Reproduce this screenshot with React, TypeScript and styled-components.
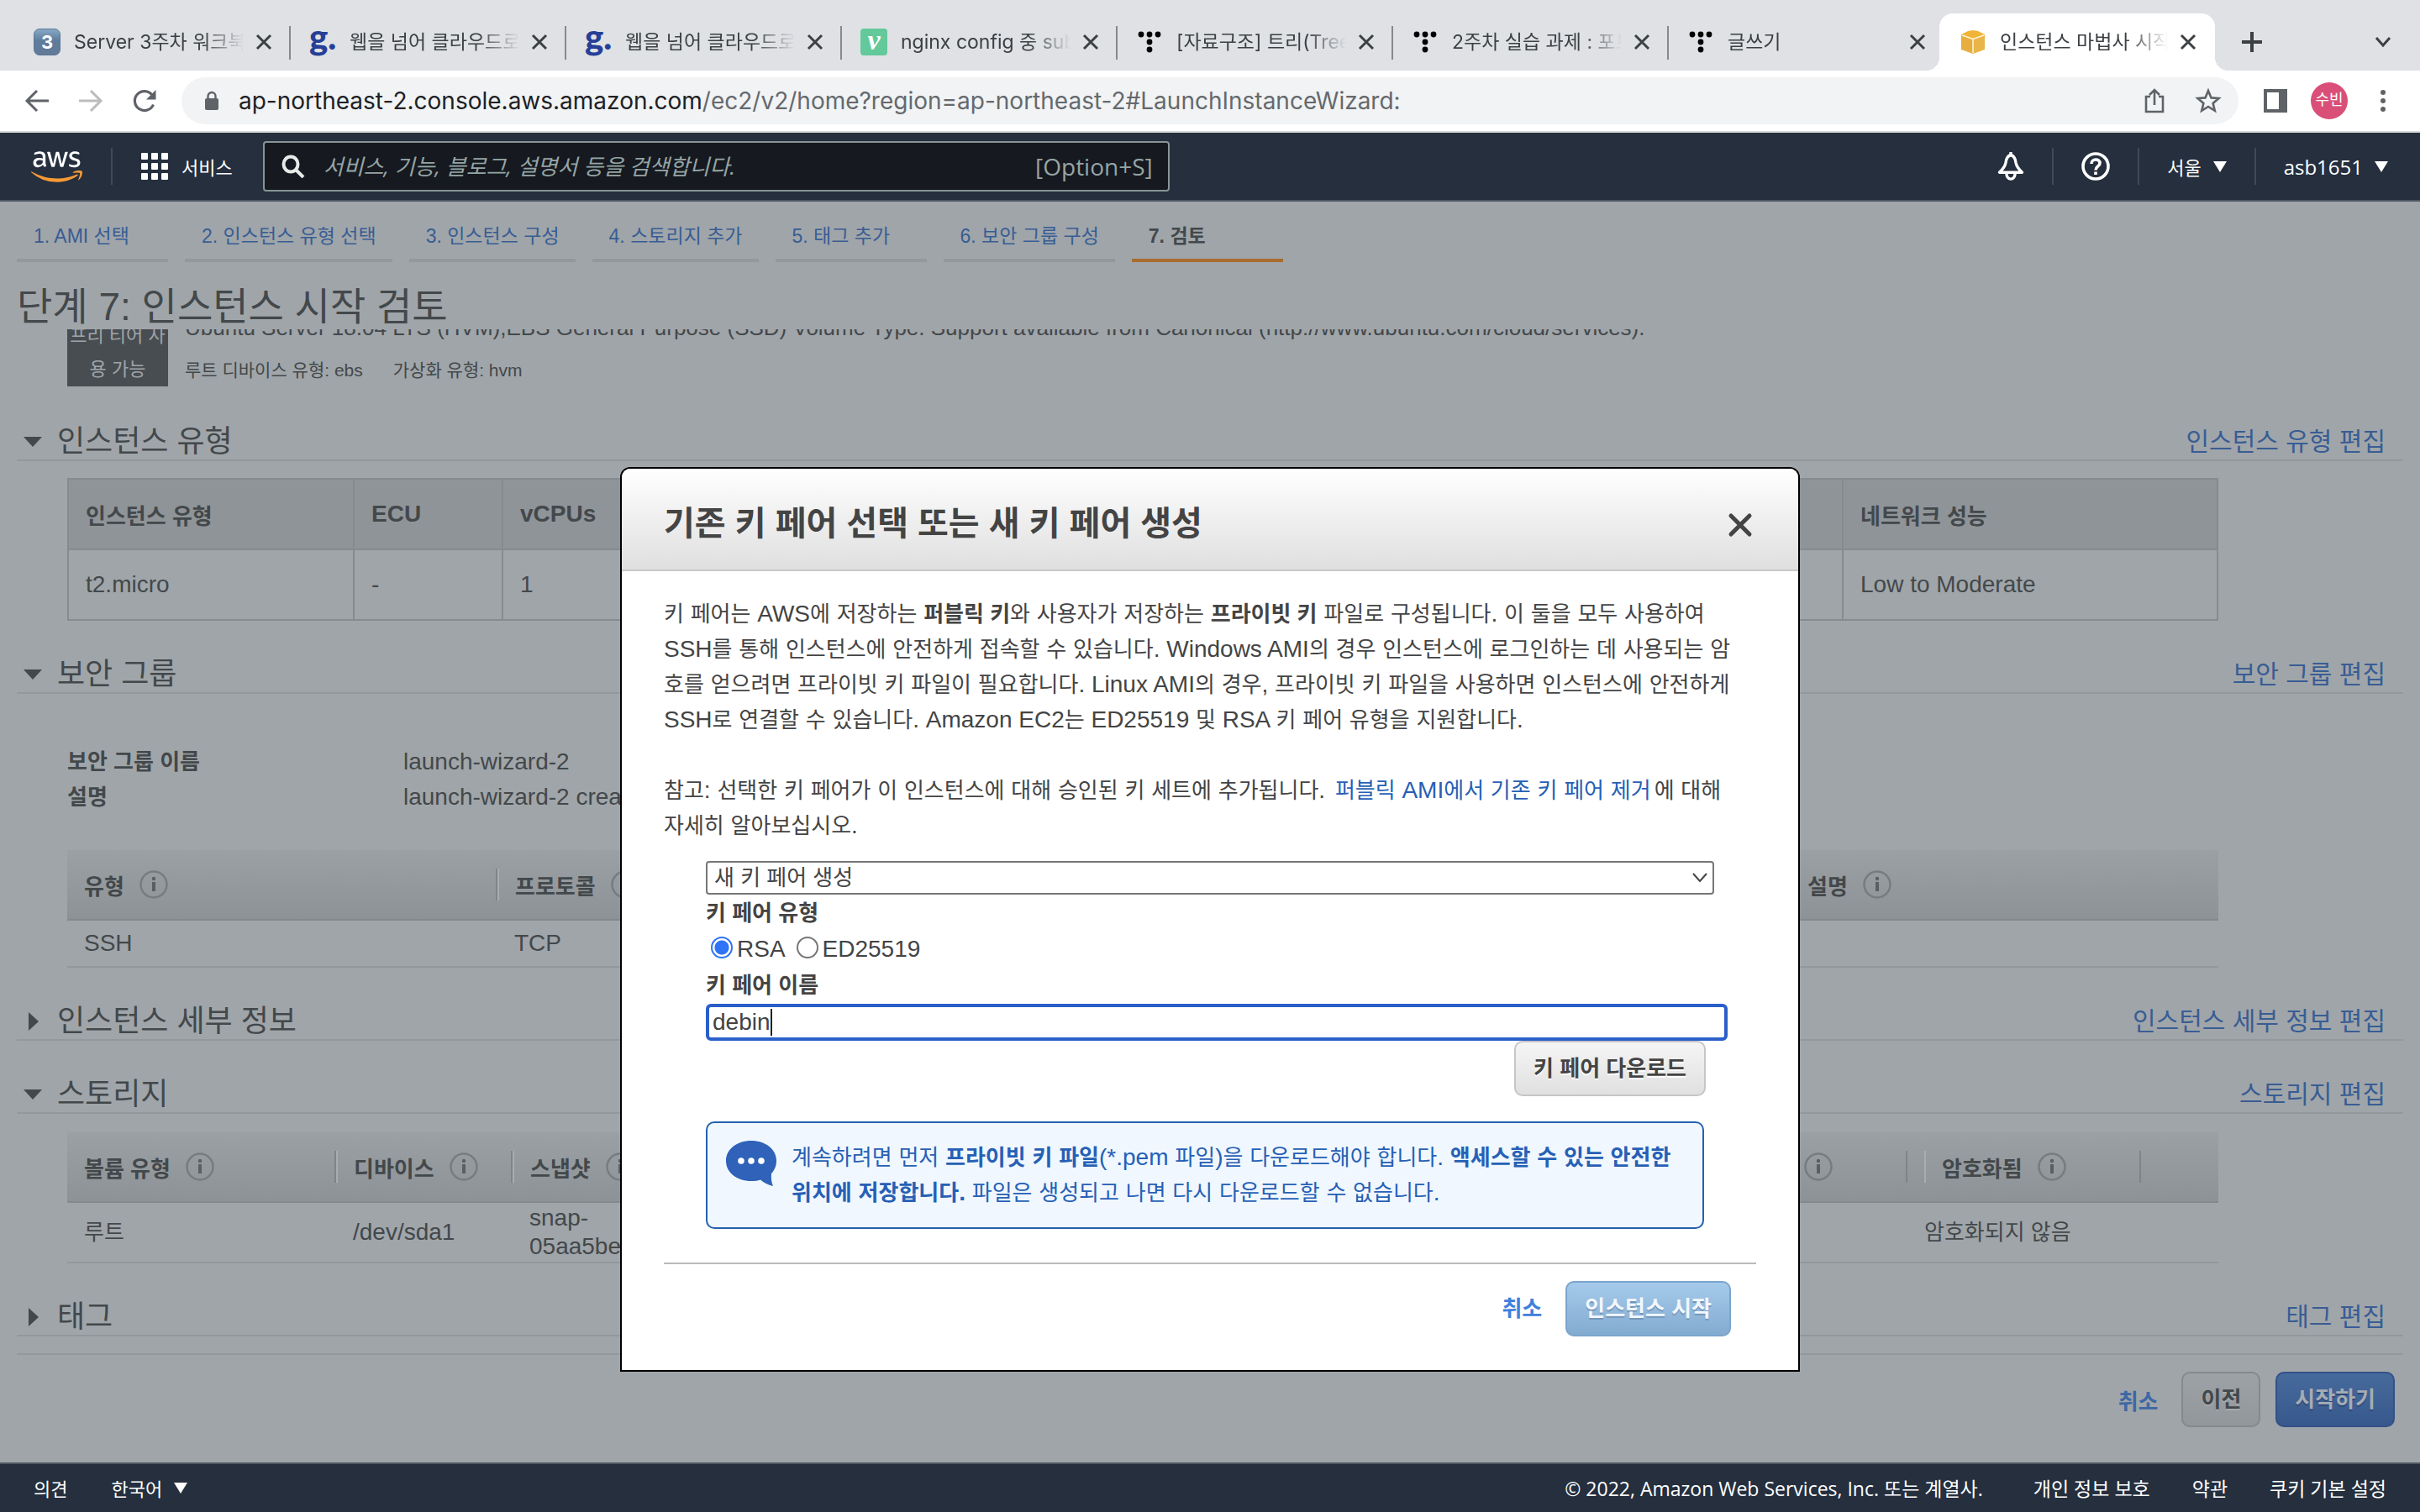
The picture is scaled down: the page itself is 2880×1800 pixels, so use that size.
import React from "react";
import styled, { createGlobalStyle, css } from "styled-components";
import { FaAws } from "react-icons/fa";

const body = `"Liberation Sans", "Noto Sans CJK KR", sans-serif`;
const ember = `"Open Sans", "Noto Sans CJK KR", sans-serif`;
const system = `Inter, "Noto Sans CJK KR", sans-serif`;

const dim = {
  page: "#a0a5a9",
  text: "#43484b",
  link: "#385d94",
  line: "#93989c",
  edge: "#868b8f",
  head: "#8f9498",
};

const GlobalStyle = createGlobalStyle`
  *, *::before, *::after { box-sizing: border-box; }
  body { margin: 0; font-family: ${body}; color: #444; }
  button, input, select { font: inherit; color: inherit; margin: 0; }
  button { cursor: pointer; }
  a { text-decoration: none; color: inherit; }
  h1, h2, p, dl, dd { margin: 0; }
  svg { display: block; flex: none; }
`;

const Screen = styled.div`
  min-height: 100vh;
  display: flex;
  flex-direction: column;
  background: ${dim.page};
`;

/* ---------- browser chrome ---------- */

const TabStrip = styled.div`
  display: flex;
  align-items: flex-end;
  height: 84px;
  padding-left: 18px;
  background: #dfe1e5;
  font-family: ${system};
  font-size: 23px;
  color: #3c4043;
`;

const Tab = styled.div<{ $active?: boolean; $divider?: boolean }>`
  position: relative;
  flex: 0 1 328px;
  min-width: 0;
  height: 68px;
  display: flex;
  align-items: center;
  padding: 0 22px;
  ${(p) =>
    p.$divider &&
    css`
      &::after {
        content: "";
        position: absolute;
        right: 0;
        top: 15px;
        width: 2px;
        height: 40px;
        background: #85888c;
      }
    `}
  ${(p) =>
    p.$active &&
    css`
      margin-left: -6px;
      padding: 0 22px 0 24px;
      background: #fff;
      border-radius: 16px 16px 0 0;
      &::before,
      &::after {
        content: "";
        position: absolute;
        bottom: 0;
        width: 16px;
        height: 16px;
      }
      &::before {
        left: -16px;
        background: radial-gradient(circle at 0 0, transparent 16px, #fff 16px);
      }
      &::after {
        right: -16px;
        background: radial-gradient(circle at 100% 0, transparent 16px, #fff 16px);
      }
    `}
`;

const TabTitle = styled.span`
  flex: 1;
  min-width: 0;
  margin: 0 14px 0 16px;
  line-height: 36px;
  white-space: nowrap;
  overflow: hidden;
  mask-image: linear-gradient(to right, #000 calc(100% - 48px), transparent);
`;

const IconButton = styled.button`
  display: flex;
  align-items: center;
  justify-content: center;
  padding: 0;
  border: 0;
  background: none;
`;

const StripButton = styled(IconButton)<{ $end?: boolean }>`
  width: 32px;
  height: 68px;
  margin-left: ${(p) => (p.$end ? "auto" : "28px")};
  margin-right: ${(p) => (p.$end ? "28px" : "0")};
`;

const Keycap = styled.span`
  flex: none;
  width: 32px;
  height: 32px;
  border-radius: 7px;
  border: 1px solid #5b7896;
  background: linear-gradient(#86a8c6, #5f7c9c 45%, #637a98);
  color: #fff;
  font-size: 22px;
  font-weight: 700;
  line-height: 30px;
  text-align: center;
`;

const GMark = styled.span`
  flex: none;
  width: 32px;
  font-family: Lato, sans-serif;
  font-weight: 900;
  font-size: 42px;
  line-height: 26px;
  height: 40px;
  color: #263f96;
`;

const Velog = styled.span`
  flex: none;
  width: 32px;
  height: 32px;
  border-radius: 4px;
  background: #63c99a;
  color: #fff;
  font-family: "Liberation Serif", serif;
  font-style: italic;
  font-weight: 700;
  font-size: 34px;
  line-height: 28px;
  text-align: center;
`;

const Toolbar = styled.div`
  display: flex;
  align-items: center;
  height: 74px;
  padding: 0 28px;
  background: #fff;
  border-bottom: 2px solid #d9dadb;
  color: #5f6368;
`;

const NavButtons = styled.div`
  display: flex;
  gap: 32px;
  margin-right: 28px;
`;

const AddressBar = styled.div`
  flex: 1;
  display: flex;
  align-items: center;
  height: 56px;
  padding: 0 20px 0 24px;
  border-radius: 28px;
  background: #f1f3f4;
  font-family: ${system};
  font-size: 28px;
`;

const Url = styled.span`
  flex: 1;
  margin-left: 20px;
  color: #65696d;
  white-space: nowrap;
  b { font-weight: 400; color: #202124; }
`;

const AddressActions = styled.div`
  display: flex;
  gap: 32px;
`;

const BrowserActions = styled.div`
  display: flex;
  align-items: center;
  gap: 26px;
  margin-left: 28px;
`;

const Avatar = styled.span`
  width: 44px;
  height: 44px;
  border-radius: 50%;
  background: #d94f78;
  color: #fff;
  font-family: ${system};
  font-size: 18px;
  line-height: 42px;
  text-align: center;
`;

/* ---------- console header ---------- */

const ConsoleNav = styled.header`
  display: flex;
  align-items: center;
  height: 82px;
  padding: 0 38px 0 37px;
  background: #252f3e;
  border-bottom: 2px solid #4e5764;
  color: #fff;
  font-family: ${ember};
  font-size: 24px;
`;

const AwsLogo = styled.a`
  display: flex;
  margin-right: 34px;
  svg { fill: url(#aws-smile); }
`;

const NavRule = styled.span`
  width: 2px;
  height: 44px;
  background: #3f4a57;
`;

const Services = styled.button`
  display: flex;
  align-items: center;
  gap: 16px;
  margin: 0 36px 0 34px;
  padding: 0;
  border: 0;
  background: none;
  font-size: 22px;
`;

const SearchBox = styled.label`
  display: flex;
  align-items: center;
  flex: 0 1 1079px;
  height: 60px;
  padding: 0 18px 0 20px;
  border: 2px solid #879596;
  border-radius: 4px;
  background: #16191f;
  color: #95a5a6;
  font-size: 28px;
  input {
    flex: 1;
    min-width: 0;
    margin-left: 22px;
    padding: 0;
    border: 0;
    outline: 0;
    background: none;
    font-size: 26px;
  }
  input::placeholder {
    color: #95a5a6;
    font-style: italic;
    opacity: 1;
  }
`;

const NavRight = styled.div`
  display: flex;
  align-items: center;
  gap: 33px;
  margin-left: auto;
`;

const MenuButton = styled.button<{ $hangul?: boolean }>`
  display: flex;
  align-items: center;
  gap: 14px;
  padding: 0;
  border: 0;
  background: none;
  font-size: ${(p) => (p.$hangul ? 22 : 24)}px;
`;

/* ---------- wizard page ---------- */

const Main = styled.main`
  position: relative;
  flex: 1;
  display: flex;
  flex-direction: column;
  padding: 0 20px;
  color: ${dim.text};
  font-size: 26px;
`;

const Steps = styled.nav`
  display: flex;
  gap: 20px;
  font-size: 23px;
`;

const Step = styled.a<{ $current?: boolean }>`
  min-width: 180px;
  padding: 24px 19px 10px 20px;
  line-height: 34px;
  border-bottom: 4px solid ${(p) => (p.$current ? "#a96c30" : dim.line)};
  color: ${(p) => (p.$current ? dim.text : dim.link)};
  font-weight: ${(p) => (p.$current ? 700 : 400)};
  white-space: nowrap;
`;

const PageTitle = styled.h1`
  margin-top: 26px;
  font-size: 46px;
  font-weight: 400;
  line-height: 54px;
`;

const AmiSummary = styled.div`
  display: flex;
  align-items: flex-end;
  gap: 20px;
  height: 68px;
  margin-bottom: 2px;
  padding-left: 60px;
  overflow: hidden;
`;

const FreeTier = styled.span`
  width: 120px;
  background: #484d51;
  color: ${dim.page};
  font-size: 22px;
  line-height: 40px;
  text-align: center;
  word-break: break-all;
`;

const AmiText = styled.div`
  font-size: 26px;
  line-height: 40px;
  white-space: nowrap;
`;

const AmiMeta = styled.div`
  display: flex;
  gap: 36px;
  font-size: 21px;
  line-height: 38px;
  padding-top: 12px;
`;

const SectionBox = styled.section`
  margin-top: 41px;
`;

const SectionHead = styled.div`
  display: flex;
  align-items: center;
  justify-content: space-between;
  height: 46px;
  padding: 2px 21px 0 8px;
  border-bottom: 2px solid ${dim.line};
  a {
    color: ${dim.link};
    font-size: 30px;
    line-height: 44px;
  }
`;

const SectionTitle = styled.h2`
  display: flex;
  align-items: center;
  gap: 18px;
  font-size: 36px;
  font-weight: 400;
  line-height: 44px;
`;

const SectionBody = styled.div<{ $top: number }>`
  padding: ${(p) => p.$top}px 220px 0 60px;
`;

const SpecTable = styled.table`
  width: 100%;
  table-layout: fixed;
  border-collapse: collapse;
  th,
  td {
    height: 84px;
    padding: 0 20px;
    border: 2px solid ${dim.edge};
    text-align: left;
    white-space: nowrap;
  }
  th { background: ${dim.head}; }
  td { font-size: 28px; }
`;

const Latin = styled.span`
  font-size: 28px;
`;

const Details = styled.dl`
  display: grid;
  grid-template-columns: 400px 1fr;
  margin-bottom: 42px;
  line-height: 42px;
  dt { font-weight: 700; }
  dd { font-size: 28px; }
`;

const GridTable = styled.table<{ $row: number }>`
  width: 100%;
  table-layout: fixed;
  border-collapse: separate;
  border-spacing: 0;
  thead { background: linear-gradient(#9ba0a4, #8d9296); }
  th {
    height: 84px;
    padding: 0;
    border-bottom: 2px solid #84898d;
    text-align: left;
  }
  td {
    height: ${(p) => p.$row}px;
    padding: 0 20px;
    border-bottom: 2px solid ${dim.line};
    line-height: 34px;
    white-space: nowrap;
  }
`;

const HeadCell = styled.div<{ $first?: boolean; $last?: boolean; $inset?: boolean }>`
  display: flex;
  align-items: center;
  gap: 18px;
  height: 38px;
  margin-left: ${(p) => (p.$inset ? 20 : 0)}px;
  padding-left: ${(p) => (p.$first ? 20 : 19)}px;
  border-left: ${(p) => (p.$first ? 0 : 2)}px solid #a9adb1;
  border-right: ${(p) => (p.$last ? 0 : 2)}px solid #7f8488;
  white-space: nowrap;
`;

const PageActions = styled.div`
  display: flex;
  align-items: center;
  justify-content: flex-end;
  gap: 18px;
  margin-top: 20px;
  padding: 20px 10px 0 0;
  border-top: 2px solid ${dim.line};
`;

const CancelLink = styled.a<{ $dim?: boolean }>`
  margin-right: 10px;
  color: ${(p) => (p.$dim ? "#3d68a4" : "#4080dc")};
  font-size: 26px;
  font-weight: 700;
`;

const tones = {
  light: { bg: "linear-gradient(#f5f5f5, #e0e0e0)", line: "#c6c6c6", ink: "#444", glow: "#fff" },
  lightDim: { bg: "linear-gradient(#9da2a6, #92979b)", line: "#85898d", ink: dim.text, glow: "#a6abaf" },
  primaryDim: { bg: "linear-gradient(#476a9c, #37588c)", line: "#325188", ink: "#a5acb4", glow: "#2c4876" },
  disabled: { bg: "linear-gradient(#a5caeb, #83abd0)", line: "#7ba5cc", ink: "#f1f7fd", glow: "#7396b8" },
};

const Button = styled.button<{ $tone: keyof typeof tones }>`
  height: 66px;
  padding: 0 21px;
  border: 2px solid ${(p) => tones[p.$tone].line};
  border-radius: 10px;
  background: ${(p) => tones[p.$tone].bg};
  color: ${(p) => tones[p.$tone].ink};
  text-shadow: 0 2px 0 ${(p) => tones[p.$tone].glow};
  font-size: 26px;
  font-weight: 700;
  line-height: 40px;
  white-space: nowrap;
`;

/* ---------- key pair dialog ---------- */

const DialogLayer = styled.div`
  position: absolute;
  inset: 0;
  display: flex;
  justify-content: center;
  align-items: flex-start;
  padding-top: 316px;
`;

const Dialog = styled.div`
  width: 1404px;
  border: 2px solid #000;
  border-radius: 12px 12px 0 0;
  background: #fff;
  color: #444;
  font-size: 26px;
  line-height: 42px;
  overflow: hidden;
`;

const DialogHead = styled.div`
  display: flex;
  align-items: center;
  justify-content: space-between;
  height: 122px;
  padding: 14px 54px 0 50px;
  border-bottom: 2px solid #c8c8c8;
  background: linear-gradient(#fff, #dfdfdf);
  h2 {
    font-size: 40px;
    line-height: 54px;
    padding-bottom: 4px;
  }
`;

const DialogBody = styled.div`
  margin: 0 50px;
  padding: 30px 0 40px;
  border-bottom: 2px solid #bbb;
`;

const Paragraph = styled.p`
  margin-bottom: 42px;
  white-space: nowrap;
  a { color: #2660b5; margin: 0 4px; }
`;

const Form = styled.form`
  display: flex;
  flex-direction: column;
  margin: -21px 34px 0 50px;
`;

const SelectWrap = styled.div`
  position: relative;
  width: 1200px;
  svg {
    position: absolute;
    right: 8px;
    top: 14px;
    pointer-events: none;
  }
  select {
    display: block;
    appearance: none;
    width: 100%;
    height: 40px;
    padding: 0 8px;
    border: 2px solid #767676;
    border-radius: 4px;
    background: #fff;
    line-height: 36px;
  }
`;

const FieldLabel = styled.label`
  font-weight: 700;
  line-height: 44px;
`;

const RadioRow = styled.div`
  display: flex;
  gap: 13px;
  padding-left: 6px;
  font-size: 28px;
  line-height: 42px;
  label {
    display: flex;
    align-items: center;
    gap: 5px;
  }
  input {
    appearance: none;
    width: 26px;
    height: 26px;
    margin-bottom: 4px;
    border: 2px solid #767676;
    border-radius: 50%;
    background: #fff;
  }
  input:checked {
    border-color: #2f73f6;
    background: radial-gradient(circle, #2f73f6 8px, #fff 9px);
  }
`;

const NameField = styled.div`
  display: flex;
  align-items: center;
  width: 1216px;
  height: 44px;
  padding: 0 4px;
  border: 4px solid #2a5fc9;
  border-radius: 6px;
  input {
    field-sizing: content;
    padding: 0;
    border: 0;
    outline: 0;
    background: none;
    caret-color: transparent;
    font-size: 28px;
    line-height: 34px;
  }
`;

const Caret = styled.span`
  width: 2px;
  height: 32px;
  background: #222;
`;

const DownloadRow = styled.div`
  display: flex;
  justify-content: flex-end;
  padding-right: 26px;
`;

const Notice = styled.div`
  display: flex;
  gap: 18px;
  width: 1188px;
  min-height: 128px;
  margin-top: 30px;
  padding: 20px 22px;
  border: 2px solid #2561b0;
  border-radius: 10px;
  background: #f0f7fe;
  color: #2660b5;
  white-space: nowrap;
`;

const DialogFoot = styled.div`
  display: flex;
  align-items: center;
  justify-content: flex-end;
  gap: 18px;
  padding: 20px 80px 40px;
`;

/* ---------- footer ---------- */

const Footer = styled.footer`
  display: flex;
  align-items: center;
  height: 59px;
  padding: 0 40px 2px;
  border-top: 2px solid #4e5764;
  background: #252f3e;
  color: #fff;
  font-family: ${ember};
  font-size: 23px;
`;

const FooterLeft = styled.div`
  display: flex;
  align-items: center;
  gap: 52px;
  font-size: 22px;
`;

const FooterRight = styled.div`
  display: flex;
  gap: 50px;
  margin-left: auto;
  span { margin-right: 10px; }
`;

/* ---------- drawings ---------- */

type StrokeProps = { w: number; h: number; d: string; width?: number; color?: string; cap?: "butt" | "round" };

const Stroke = ({ w, h, d, width = 3, color = "currentColor", cap = "butt" }: StrokeProps) => (
  <svg width={w} height={h} viewBox={`0 0 ${w} ${h}`} fill="none" stroke={color} strokeWidth={width} strokeLinecap={cap}>
    <path d={d} />
  </svg>
);

const CloseTab = () => (
  <IconButton aria-label="닫기">
    <Stroke w={20} h={20} d="M2 2L18 18M18 2L2 18" color="#3c4043" />
  </IconButton>
);

const Tistory = () => (
  <svg width="32" height="32" viewBox="0 0 32 32" fill="#000">
    {[[6, 7], [16, 7], [26, 7], [16, 16], [16, 25]].map(([x, y]) => (
      <circle key={`${x}-${y}`} cx={x} cy={y} r="3.4" />
    ))}
  </svg>
);

const Cube = () => (
  <svg width="32" height="32" viewBox="0 0 32 32">
    <path d="M2 7L16 13V30L2 25Z" fill="#e5ae3f" />
    <path d="M30 7L16 13V30L30 25Z" fill="#e9b548" />
    <path d="M2 7L10 3L16 2L22 3L30 7L16 12Z" fill="#f2b437" />
    <path d="M3 8L16 12.500L29 8M16 12V29" stroke="#fdf0d2" strokeWidth="1.600" fill="none" />
  </svg>
);

const Down = () => (
  <svg width="16" height="14" viewBox="0 0 16 14" fill="currentColor">
    <path d="M0 1H16L8 14Z" />
  </svg>
);

const Twisty = ({ open }: { open?: boolean }) => (
  <svg width="22" height="22" viewBox="0 0 22 22" fill="currentColor">
    <path d={open ? "M0 5H22L11 17Z" : "M6 0L18 11L6 22Z"} />
  </svg>
);

const Info = () => (
  <svg width="34" height="34" viewBox="0 0 34 34" fill="none">
    <circle cx="17" cy="17" r="15.500" stroke="#777c80" strokeWidth="2.500" />
    <path d="M17 14V25" stroke="#5a5f62" strokeWidth="4" />
    <circle cx="17" cy="10" r="2.200" fill="#5a5f62" />
  </svg>
);

const Bell = () => (
  <svg width="32" height="34" viewBox="0 0 32 34" fill="none" stroke="#fff" strokeWidth="3.400" strokeLinejoin="round">
    <path d="M16 3.500C12.500 4.500 10.500 8 10 12.500C9.300 17.500 6.500 20.500 2.500 24.200H29.500C25.500 20.500 22.700 17.500 22 12.500C21.500 8 19.500 4.500 16 3.500Z" />
    <path d="M10.800 25C11 34.500 21 34.500 21.200 25" />
    <path d="M16 0V4" />
  </svg>
);

const Help = () => (
  <svg width="34" height="34" viewBox="0 0 34 34" fill="none" stroke="#fff" strokeWidth="3.600">
    <circle cx="17" cy="17" r="15" />
    <path d="M12 14C12 7.500 22 7.500 22 13.200C22 17 17 16.800 17 21.500" />
    <path d="M17 23.500V27" />
  </svg>
);

const Bubble = () => (
  <svg width="60" height="56" viewBox="0 0 60 56">
    <path d="M30 1C13 1 0 11 0 25S13 49 30 49C34 49 38 48.500 41 47.500C45 51 50 53.500 56 55C54 50 53.500 46 54 40C58 36 60 30 60 25C60 11 47 1 30 1Z" fill="#2f62b8" />
    <circle cx="18" cy="25" r="3.800" fill="#fff" />
    <circle cx="30" cy="25" r="3.800" fill="#fff" />
    <circle cx="42" cy="25" r="3.800" fill="#fff" />
  </svg>
);

/* Latin letters, digits and spaces run one step larger than the hangul around them. */
const Mix = ({ children }: { children: string }) => (
  <>
    {children.split(/([\x20-\x7e]+)/).map((run, i) => (i % 2 ? <Latin key={i}>{run}</Latin> : run))}
  </>
);

/* ---------- data ---------- */

const browserTabs = [
  { icon: <Keycap>3</Keycap>, title: "Server 3주차 워크북" },
  { icon: <GMark>g.</GMark>, title: "웹을 넘어 클라우드로" },
  { icon: <GMark>g.</GMark>, title: "웹을 넘어 클라우드로" },
  { icon: <Velog>v</Velog>, title: "nginx config 중 sub" },
  { icon: <Tistory />, title: "[자료구조] 트리(Tree)" },
  { icon: <Tistory />, title: "2주차 실습 과제 : 포트" },
  { icon: <Tistory />, title: "글쓰기" },
  { icon: <Cube />, title: "인스턴스 마법사 시작" },
];

const steps = [
  "1. AMI 선택",
  "2. 인스턴스 유형 선택",
  "3. 인스턴스 구성",
  "4. 스토리지 추가",
  "5. 태그 추가",
  "6. 보안 그룹 구성",
  "7. 검토",
];

type SectionProps = { title: string; edit: string; open?: boolean; children?: React.ReactNode };

const Section = ({ title, edit, open, children }: SectionProps) => (
  <SectionBox>
    <SectionHead>
      <SectionTitle>
        <Twisty open={open} />
        {title}
      </SectionTitle>
      <a href="#edit">{edit}</a>
    </SectionHead>
    {children}
  </SectionBox>
);

const Browser = () => (
  <>
    <TabStrip>
      {browserTabs.map((t, i) => (
        <Tab key={i} $active={i === 7} $divider={i < 6}>
          {t.icon}
          <TabTitle>{t.title}</TabTitle>
          <CloseTab />
        </Tab>
      ))}
      <StripButton aria-label="새 탭">
        <Stroke w={24} h={24} d="M12 0V24M0 12H24" width={4} color="#3c4043" />
      </StripButton>
      <StripButton $end aria-label="탭 검색">
        <Stroke w={20} h={14} d="M2 2L10 11L18 2" color="#3c4043" />
      </StripButton>
    </TabStrip>
    <Toolbar>
      <NavButtons>
        <IconButton aria-label="뒤로">
          <Stroke w={32} h={28} d="M30 14H4M16 2L4 14L16 26" />
        </IconButton>
        <IconButton aria-label="앞으로">
          <Stroke w={32} h={28} d="M2 14H28M16 2L28 14L16 26" color="#babcbe" />
        </IconButton>
        <IconButton aria-label="새로고침">
          <svg width="32" height="32" viewBox="0 0 32 32" fill="none" stroke="currentColor" strokeWidth="3.200">
            <path d="M26.500 20.500A11.500 11.500 0 1 1 25 9" />
            <path d="M29.500 3V14.500H18Z" fill="currentColor" stroke="none" />
          </svg>
        </IconButton>
      </NavButtons>
      <AddressBar>
        <svg width="24" height="24" viewBox="0 0 24 24" fill="none">
          <rect x="4" y="9" width="16" height="14" rx="2" fill="#5f6368" />
          <path d="M7.500 10V6.500A4.500 4.500 0 0 1 16.500 6.500V10" stroke="#5f6368" strokeWidth="2.400" />
        </svg>
        <Url>
          <b>ap-northeast-2.console.aws.amazon.com</b>/ec2/v2/home?region=ap-northeast-2#LaunchInstanceWizard:
        </Url>
        <AddressActions>
          <IconButton aria-label="공유">
            <Stroke w={32} h={32} d="M11 11H6V29H26V11H21M16 21V3M10 9L16 3L22 9" width={2.6} />
          </IconButton>
          <IconButton aria-label="북마크">
            <Stroke w={32} h={32} d="M16 4L19.500 12.400L28.500 13L21.600 18.900L23.800 27.800L16 23L8.200 27.800L10.400 18.900L3.500 13L12.500 12.400Z" width={2.6} />
          </IconButton>
        </AddressActions>
      </AddressBar>
      <BrowserActions>
        <svg width="32" height="32" viewBox="0 0 32 32">
          <path fillRule="evenodd" d="M2 2H30V30H2ZM6 6V26H20V6Z" fill="#5f6368" />
        </svg>
        <Avatar>수빈</Avatar>
        <svg width="32" height="32" viewBox="0 0 32 32" fill="#5f6368">
          <circle cx="16" cy="6" r="3" />
          <circle cx="16" cy="16" r="3" />
          <circle cx="16" cy="26" r="3" />
        </svg>
      </BrowserActions>
    </Toolbar>
  </>
);

const Header = () => (
  <ConsoleNav>
    <svg width="0" height="0">
      <linearGradient id="aws-smile" x1="0" y1="0" x2="0" y2="1">
        <stop offset="0.62" stopColor="#fff" />
        <stop offset="0.62" stopColor="#f79a34" />
      </linearGradient>
    </svg>
    <AwsLogo href="#home" aria-label="AWS">
      <FaAws size={61} />
    </AwsLogo>
    <NavRule />
    <Services>
      <svg width="32" height="32" viewBox="0 0 32 32" fill="#fff">
        {[0, 12, 24].flatMap((y) => [0, 12, 24].map((x) => <rect key={`${x}-${y}`} x={x} y={y} width="8" height="8" rx="1" />))}
      </svg>
      서비스
    </Services>
    <SearchBox>
      <Stroke w={28} h={28} d="M19.500 11.500A8.500 9 0 1 1 2.500 11.500A8.500 9 0 1 1 19.500 11.500M17 18L26 27" width={4} color="#e8eaea" />
      <input aria-label="검색" placeholder="서비스, 기능, 블로그, 설명서 등을 검색합니다." />
      <span>[Option+S]</span>
    </SearchBox>
    <NavRight>
      <IconButton aria-label="알림">
        <Bell />
      </IconButton>
      <NavRule />
      <IconButton aria-label="도움말">
        <Help />
      </IconButton>
      <NavRule />
      <MenuButton $hangul>
        서울 <Down />
      </MenuButton>
      <NavRule />
      <MenuButton>
        asb1651 <Down />
      </MenuButton>
    </NavRight>
  </ConsoleNav>
);

const KeyPairDialog = () => (
  <DialogLayer>
    <Dialog role="dialog" aria-labelledby="dialog-title">
      <DialogHead>
        <h2 id="dialog-title">기존 키 페어 선택 또는 새 키 페어 생성</h2>
        <IconButton aria-label="닫기">
          <Stroke w={30} h={30} d="M4 4L26 26M26 4L4 26" width={5} color="#444" cap="round" />
        </IconButton>
      </DialogHead>
      <DialogBody>
        <Paragraph>
          <Mix>키 페어는 AWS에 저장하는 </Mix>
          <b>퍼블릭 키</b>
          <Mix>와 사용자가 저장하는 </Mix>
          <b>프라이빗 키</b>
          <Mix> 파일로 구성됩니다. 이 둘을 모두 사용하여</Mix>
          <br />
          <Mix>SSH를 통해 인스턴스에 안전하게 접속할 수 있습니다. Windows AMI의 경우 인스턴스에 로그인하는 데 사용되는 암</Mix>
          <br />
          <Mix>호를 얻으려면 프라이빗 키 파일이 필요합니다. Linux AMI의 경우, 프라이빗 키 파일을 사용하면 인스턴스에 안전하게</Mix>
          <br />
          <Mix>SSH로 연결할 수 있습니다. Amazon EC2는 ED25519 및 RSA 키 페어 유형을 지원합니다.</Mix>
        </Paragraph>
        <Paragraph>
          <Mix>참고: 선택한 키 페어가 이 인스턴스에 대해 승인된 키 세트에 추가됩니다. </Mix>
          <a href="#remove">
            <Mix>퍼블릭 AMI에서 기존 키 페어 제거</Mix>
          </a>
          <Mix>에 대해</Mix>
          <br />
          <Mix>자세히 알아보십시오.</Mix>
        </Paragraph>
        <Form>
          <SelectWrap>
            <select aria-label="키 페어 옵션">
              <option>새 키 페어 생성</option>
            </select>
            <Stroke w={18} h={12} d="M1 1L9 10L17 1" width={2} color="#444" />
          </SelectWrap>
          <FieldLabel as="div">키 페어 유형</FieldLabel>
          <RadioRow>
            <label>
              <input type="radio" name="type" defaultChecked /> RSA
            </label>
            <label>
              <input type="radio" name="type" /> ED25519
            </label>
          </RadioRow>
          <FieldLabel htmlFor="key-name">키 페어 이름</FieldLabel>
          <NameField>
            <input id="key-name" defaultValue="debin" />
            <Caret />
          </NameField>
          <DownloadRow>
            <Button type="button" $tone="light">
              키 페어 다운로드
            </Button>
          </DownloadRow>
          <Notice>
            <Bubble />
            <span>
              <Mix>계속하려면 먼저 </Mix>
              <b>
                <Mix>프라이빗 키 파일</Mix>
              </b>
              <Mix>(*.pem 파일)을 다운로드해야 합니다. </Mix>
              <b>
                <Mix>액세스할 수 있는 안전한</Mix>
                <br />
                <Mix>위치에 저장합니다.</Mix>
              </b>
              <Mix> 파일은 생성되고 나면 다시 다운로드할 수 없습니다.</Mix>
            </span>
          </Notice>
        </Form>
      </DialogBody>
      <DialogFoot>
        <CancelLink href="#cancel">취소</CancelLink>
        <Button $tone="disabled">인스턴스 시작</Button>
      </DialogFoot>
    </Dialog>
  </DialogLayer>
);

export default function App() {
  return (
    <Screen>
      <GlobalStyle />
      <Browser />
      <Header />
      <Main>
        <Steps>
          {steps.map((s, i) => (
            <Step key={s} href={`#step${i + 1}`} $current={i === 6}>
              {s}
            </Step>
          ))}
        </Steps>
        <PageTitle>단계 7: 인스턴스 시작 검토</PageTitle>
        <AmiSummary>
          <FreeTier>프리 티어 사용 가능</FreeTier>
          <div>
            <AmiText>
              Ubuntu Server 18.04 LTS (HVM),EBS General Purpose (SSD) Volume Type. Support available from Canonical
              (http://www.ubuntu.com/cloud/services).
            </AmiText>
            <AmiMeta>
              <span>루트 디바이스 유형: ebs</span>
              <span>가상화 유형: hvm</span>
            </AmiMeta>
          </div>
        </AmiSummary>

        <Section title="인스턴스 유형" edit="인스턴스 유형 편집" open>
          <SectionBody $top={20}>
            <SpecTable>
              <colgroup>
                <col width="340" />
                <col width="177" />
                <col />
                <col width="446" />
              </colgroup>
              <thead>
                <tr>
                  <th>인스턴스 유형</th>
                  <th>
                    <Latin>ECU</Latin>
                  </th>
                  <th>
                    <Latin>vCPUs</Latin>
                  </th>
                  <th>네트워크 성능</th>
                </tr>
              </thead>
              <tbody>
                <tr>
                  <td>t2.micro</td>
                  <td>-</td>
                  <td>1</td>
                  <td>Low to Moderate</td>
                </tr>
              </tbody>
            </SpecTable>
          </SectionBody>
        </Section>

        <Section title="보안 그룹" edit="보안 그룹 편집" open>
          <SectionBody $top={60}>
            <Details>
              <dt>보안 그룹 이름</dt>
              <dd>launch-wizard-2</dd>
              <dt>설명</dt>
              <dd>launch-wizard-2 created</dd>
            </Details>
            <GridTable $row={56}>
              <colgroup>
                <col width="512" />
                <col />
                <col width="510" />
              </colgroup>
              <thead>
                <tr>
                  <th>
                    <HeadCell $first>
                      유형 <Info />
                    </HeadCell>
                  </th>
                  <th>
                    <HeadCell>
                      프로토콜 <Info />
                    </HeadCell>
                  </th>
                  <th>
                    <HeadCell $last>
                      설명 <Info />
                    </HeadCell>
                  </th>
                </tr>
              </thead>
              <tbody>
                <tr>
                  <td>
                    <Latin>SSH</Latin>
                  </td>
                  <td>
                    <Latin>TCP</Latin>
                  </td>
                  <td />
                </tr>
              </tbody>
            </GridTable>
          </SectionBody>
        </Section>

        <Section title="인스턴스 세부 정보" edit="인스턴스 세부 정보 편집" />

        <Section title="스토리지" edit="스토리지 편집" open>
          <SectionBody $top={22}>
            <GridTable $row={72}>
              <colgroup>
                <col width="320" />
                <col width="210" />
                <col />
                <col width="144" />
                <col width="278" />
                <col width="92" />
              </colgroup>
              <thead>
                <tr>
                  <th>
                    <HeadCell $first>
                      볼륨 유형 <Info />
                    </HeadCell>
                  </th>
                  <th>
                    <HeadCell>
                      디바이스 <Info />
                    </HeadCell>
                  </th>
                  <th>
                    <HeadCell>
                      스냅샷 <Info />
                    </HeadCell>
                  </th>
                  <th>
                    <HeadCell>
                      <Info />
                    </HeadCell>
                  </th>
                  <th>
                    <HeadCell $inset>
                      암호화됨 <Info />
                    </HeadCell>
                  </th>
                  <th />
                </tr>
              </thead>
              <tbody>
                <tr>
                  <td>루트</td>
                  <td>
                    <Latin>/dev/sda1</Latin>
                  </td>
                  <td>
                    <Latin>
                      snap-
                      <br />
                      05aa5be
                    </Latin>
                  </td>
                  <td />
                  <td>암호화되지 않음</td>
                  <td />
                </tr>
              </tbody>
            </GridTable>
          </SectionBody>
        </Section>

        <Section title="태그" edit="태그 편집" />

        <PageActions>
          <CancelLink $dim href="#cancel">
            취소
          </CancelLink>
          <Button $tone="lightDim">이전</Button>
          <Button $tone="primaryDim">시작하기</Button>
        </PageActions>

        <KeyPairDialog />
      </Main>
      <Footer>
        <FooterLeft>
          <a href="#feedback">의견</a>
          <MenuButton $hangul>
            한국어 <Down />
          </MenuButton>
        </FooterLeft>
        <FooterRight>
          <span>© 2022, Amazon Web Services, Inc. 또는 계열사.</span>
          <a href="#privacy">개인 정보 보호</a>
          <a href="#terms">약관</a>
          <a href="#cookies">쿠키 기본 설정</a>
        </FooterRight>
      </Footer>
    </Screen>
  );
}
